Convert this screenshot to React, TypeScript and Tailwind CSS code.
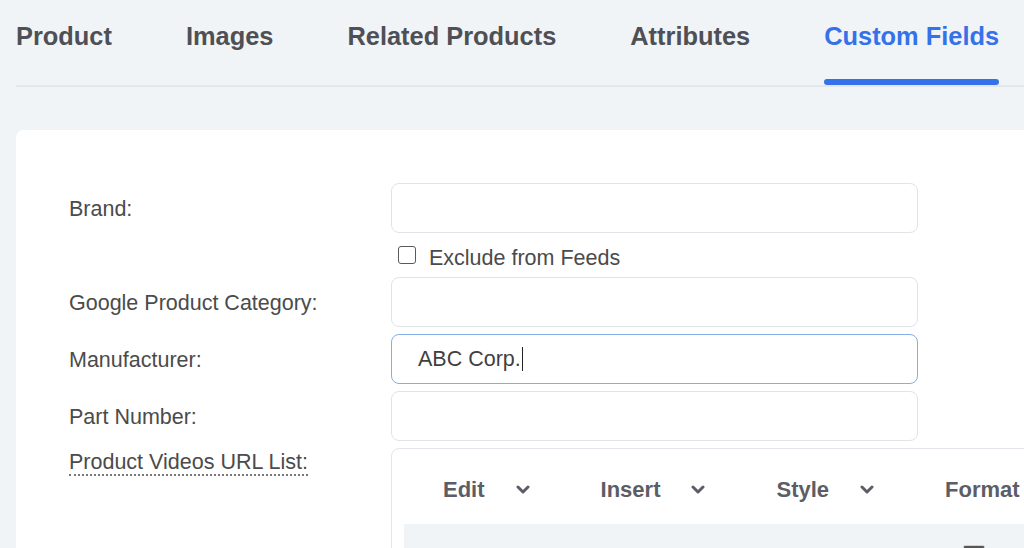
const tabs = ["Product", "Images", "Related Products", "Attributes", "Custom Fields"]
const active = "Custom Fields"

const font = { fontFamily: '"Liberation Sans", Arial, sans-serif' }

function Chevron() {
  return (
    <svg width="14" height="9" viewBox="0 0 14 9" className="shrink-0">
      <polyline points="2,2 7,7 12,2" fill="none" stroke="#5b5e66" strokeWidth="3" strokeLinecap="round" strokeLinejoin="round" />
    </svg>
  )
}

function Field({ label, value, focused }: { label: string; value?: string; focused?: boolean }) {
  return (
    <div className="flex items-center">
      <div className="w-[322px] shrink-0 pt-[2px] text-[21.5px] text-[#4b4b4b]">{label}</div>
      <div
        className={
          focused
            ? "w-[527px] h-[50px] shrink-0 rounded-[8px] border border-[#86aee6] bg-white flex items-center pl-[26px] text-[21.5px] text-[#3f3f3f]"
            : "w-[527px] h-[50px] shrink-0 rounded-[8px] border border-[#e0e3e7] bg-white"
        }
      >
        {value}
        {focused && <span className="ml-[1px] w-[1px] h-[24px] bg-[#222]" />}
      </div>
    </div>
  )
}

export default function App() {
  return (
    <div className="w-full h-[548px] bg-[#f1f4f7] overflow-hidden" style={font}>
      {/* tabs */}
      <div className="ml-[16px] flex gap-[74px] border-b-2 border-[#e3e7eb]">
        {tabs.map((t) => (
          <div key={t} className="flex flex-col">
            <div
              className={
                t === active
                  ? "pt-[20px] leading-[32px] text-[25.4px] font-bold text-[#3572ea] whitespace-nowrap"
                  : "pt-[20px] leading-[32px] text-[25.4px] font-bold text-[#4e5056] whitespace-nowrap"
              }
            >
              {t}
            </div>
            <div className={t === active ? "mt-[27px] h-[6px] rounded-full bg-[#3572ea]" : "mt-[27px] h-[6px]"} />
          </div>
        ))}
      </div>

      {/* card */}
      <div className="ml-[16px] mt-[43px] h-[500px] bg-white rounded-tl-[8px] pl-[53px] pt-[53px] flex flex-col gap-[7px]">
        <Field label="Brand:" />
        <div className="flex items-center h-[30px]">
          <div className="w-[322px] shrink-0" />
          <div className="ml-[7px] flex items-center gap-[13px] text-[21.5px] text-[#4b4b4b]">
            <span className="w-[18px] h-[18px] rounded-[3px] border-[1.5px] border-[#5a5a5a] bg-white" />
            <span className="mt-[6px]">Exclude from Feeds</span>
          </div>
        </div>
        <Field label="Google Product Category:" />
        <Field label="Manufacturer:" value="ABC Corp." focused />
        <Field label="Part Number:" />

        <div className="flex items-start">
          <div className="w-[322px] shrink-0 pt-[1px] leading-[26px] text-[21.5px] text-[#4b4b4b]">
            <span className="border-b-2 border-dotted border-[#777]">Product Videos URL List:</span>
          </div>
          <div className="w-[700px] h-[140px] shrink-0 border border-[#e3e6ea] rounded-tl-[8px]">
            <div className="h-[75px] pt-[6px] pl-[51px] flex items-center gap-[71px] text-[22px] font-bold text-[#5b5e66] whitespace-nowrap">
              {["Edit", "Insert", "Style", "Format"].map((m, i) => (
                <div key={m} className="flex items-center gap-[31px]">
                  <span>{m}</span>
                  {i < 3 && <Chevron />}
                </div>
              ))}
            </div>
            <div className="relative mx-[12px] h-[60px] bg-[#f1f4f7]">
              <div className="absolute left-[559px] top-[21px] w-[22px] h-[8px] rounded-[2px] border border-[#cfd3d8] bg-[#555]" />
            </div>
          </div>
        </div>
      </div>
    </div>
  )
}
